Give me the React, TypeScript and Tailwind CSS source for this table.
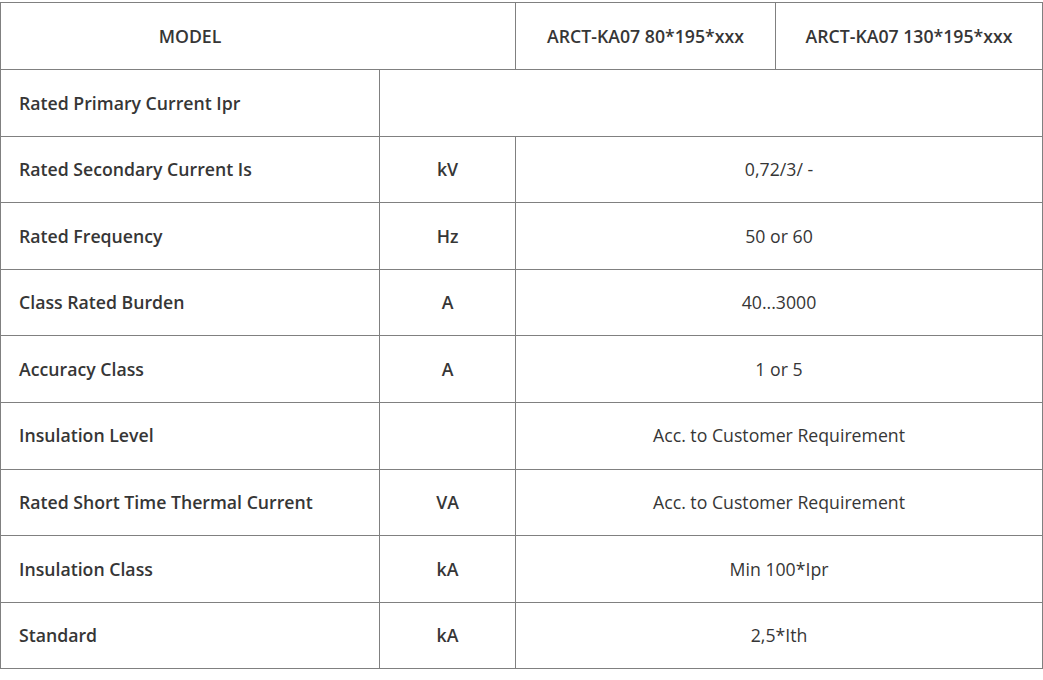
const rows: { label: string; unit: string; value: string }[] = [
  { label: "Rated Secondary Current Is", unit: "kV", value: "0,72/3/ -" },
  { label: "Rated Frequency", unit: "Hz", value: "50 or 60" },
  { label: "Class Rated Burden", unit: "A", value: "40...3000" },
  { label: "Accuracy Class", unit: "A", value: "1 or 5" },
  { label: "Insulation Level", unit: "", value: "Acc. to Customer Requirement" },
  { label: "Rated Short Time Thermal Current", unit: "VA", value: "Acc. to Customer Requirement" },
  { label: "Insulation Class", unit: "kA", value: "Min 100*Ipr" },
  { label: "Standard", unit: "kA", value: "2,5*Ith" },
];

const cell = "border border-[#808080] align-middle";

export default function App() {
  return (
    <div className="w-[1043px] bg-white pt-[2px] text-[#363636] font-['Open_Sans',sans-serif] text-[17.7px]">
      <table className="w-[1043px] border-collapse table-fixed">
        <colgroup>
          <col className="w-[379px]" />
          <col className="w-[136px]" />
          <col className="w-[260px]" />
          <col />
        </colgroup>
        <tbody>
          <tr className="h-[67px]">
            <td colSpan={2} className={`${cell} pr-[136px] text-center font-semibold`}>
              MODEL
            </td>
            <td className={`${cell} text-center font-semibold`}>ARCT-KA07 80*195*xxx</td>
            <td className={`${cell} text-center font-semibold`}>ARCT-KA07 130*195*xxx</td>
          </tr>
          <tr className="h-[66.6px]">
            <td className={`${cell} pl-[18px] font-semibold`}>Rated Primary Current Ipr</td>
            <td colSpan={3} className={cell}></td>
          </tr>
          {rows.map((r) => (
            <tr key={r.label} className="h-[66.6px]">
              <td className={`${cell} pl-[18px] font-semibold`}>{r.label}</td>
              <td className={`${cell} text-center font-semibold`}>{r.unit}</td>
              <td colSpan={2} className={`${cell} text-center`}>
                {r.value}
              </td>
            </tr>
          ))}
        </tbody>
      </table>
    </div>
  );
}
